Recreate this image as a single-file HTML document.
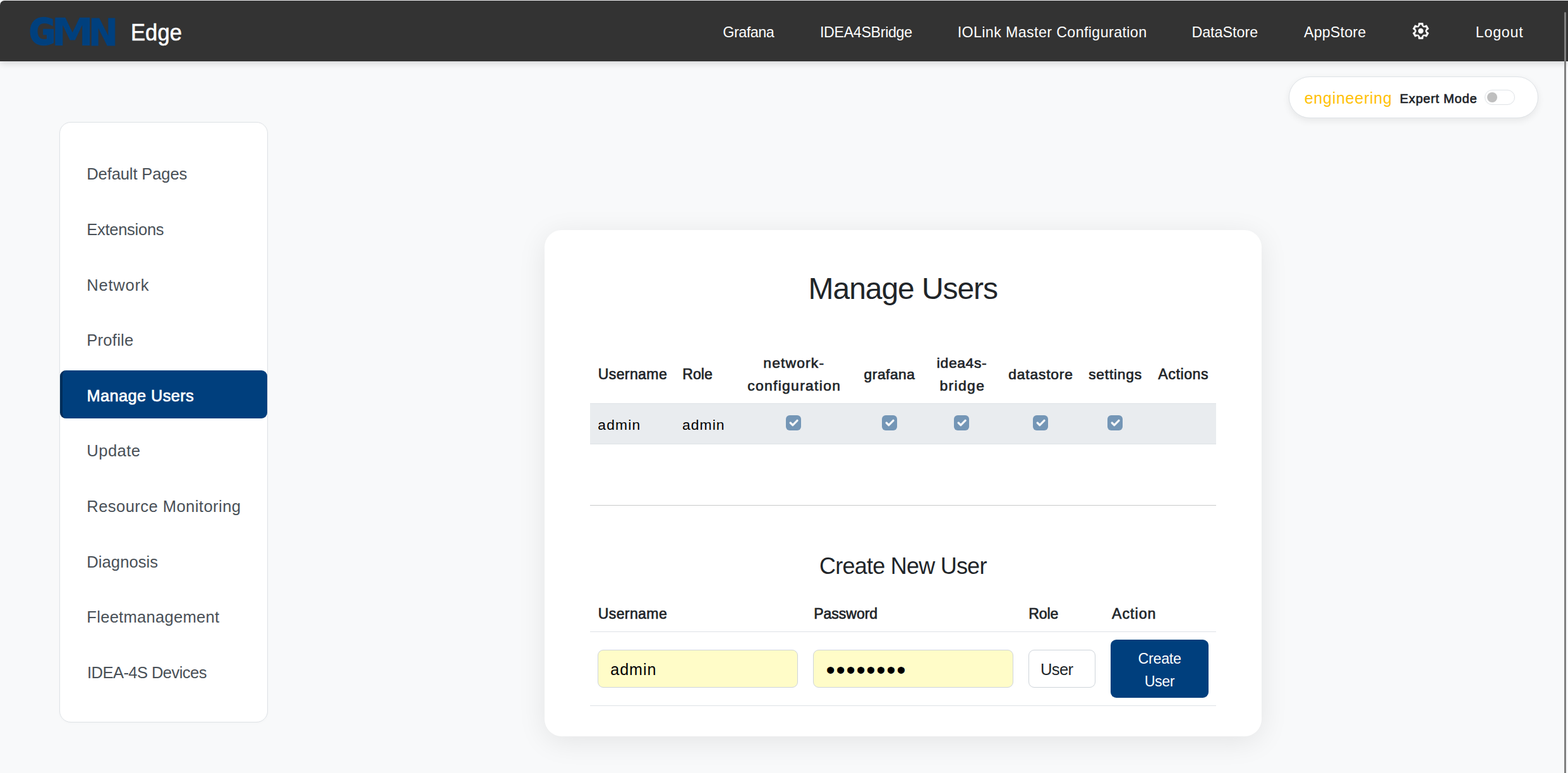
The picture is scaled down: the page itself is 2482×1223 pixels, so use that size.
<!DOCTYPE html>
<html lang="en">
<head>
<meta charset="utf-8">
<title>GMN Edge - Manage Users</title>
<meta name="viewport" content="width=device-width, initial-scale=1">
<style>
*{box-sizing:border-box}
html,body{margin:0;padding:0}
body{width:2482px;height:1223px;overflow:hidden;position:relative;background:#f8f9fa;font-family:"Liberation Sans",sans-serif;color:#212529}
.t{position:absolute;margin:0;padding:0;white-space:pre;font-weight:400;text-decoration:none;display:block}
nav,aside,main,header{position:absolute;left:0;top:0;margin:0;padding:0}
#topbar{left:0;top:1px;width:2482px;height:96px;background:#333333;box-shadow:0 3px 12px rgba(0,0,0,.15);border-top-left-radius:7px}
#logo span{position:absolute;display:block;font-family:"DejaVu Sans",sans-serif;font-size:60px;line-height:60px;font-weight:700;color:#00407e;white-space:pre;-webkit-text-stroke:0px #00407e;transform-origin:0 0}
#gear{position:absolute;left:2236px;top:36px;width:26px;height:26px;overflow:visible}
#pill{position:absolute;left:2039.5px;top:121px;width:395px;height:65.7px;border-radius:33px;background:#fff;border:1px solid #dee2e6;box-shadow:0 4px 12px rgba(0,0,0,.075)}
#switch{position:absolute;left:2350.3px;top:142px;width:47.5px;height:24px;border-radius:12px;border:1px solid #dee2e6;background:#fff}
#knob{position:absolute;left:2353.5px;top:145.7px;width:16.6px;height:16.6px;border-radius:50%;background:#bfbfbf}
#sidebar{position:absolute;left:94px;top:193px;width:329.5px;height:950px;background:#fff;border:1px solid #dee2e6;border-radius:18px;box-shadow:0 1px 4px rgba(0,0,0,.025)}
#active{position:absolute;left:95px;top:586px;width:328px;height:76px;background:#003f7d;border-radius:9px;border-left:4.5px solid #002d5a}
#card{position:absolute;left:862px;top:364px;width:1135px;height:801px;background:#fff;border-radius:27px;box-shadow:0 8px 45px rgba(0,0,0,.085)}
.line{position:absolute;left:934px;width:991px;height:1px;background:#dee2e6}
#row1{position:absolute;left:934px;top:638px;width:991px;height:65px;background:#e9ecef;border-top:1px solid #dee2e6;border-bottom:1px solid #dee2e6}
.cb{position:absolute;width:24px;height:24px;border-radius:6px;background:#7496b6;display:block}
.cb svg{display:block}
.inp{position:absolute;top:1028px;height:59.7px;border:1px solid #ced4da;border-radius:9px;background:#fffcc8}
#btn{position:absolute;left:1758px;top:1012px;width:155px;height:92px;background:#003f7d;border-radius:9px}
#dots{position:absolute;left:1307.55px;top:1040px;font-size:41px;line-height:41px;letter-spacing:1.6px;color:#000;white-space:pre;font-family:"Liberation Sans",sans-serif}
#scroll{position:absolute;left:2476px;top:19px;width:3px;height:1210px;background:#808080;border-radius:2px}
</style>
</head>
<body>
<nav id="topbar"></nav>
<header>
<a id="logo"><span style="left:45.71px;top:23.20px;transform:scale(0.8497,0.9403);-webkit-text-stroke-width:2.5px">G</span><span style="left:80.78px;top:21.49px;transform:scale(1.1303,0.9943);-webkit-text-stroke-width:0px">M</span><span style="left:140.23px;top:22.11px;transform:scale(0.9342,0.9721);-webkit-text-stroke-width:1px">N</span></a>
<span class="t" style="left:207.17px;top:33px;font-size:37.5px;line-height:37.5px;letter-spacing:0.101px;color:#fff;-webkit-text-stroke:0.6px #fff;transform:scaleX(0.92);transform-origin:0 0;">Edge</span>
<span class="t" style="left:1144.25px;top:40px;font-size:23.23px;line-height:23.23px;letter-spacing:-0.408px;color:#fff;">Grafana</span>
<span class="t" style="left:1297.95px;top:40px;font-size:23.23px;line-height:23.23px;letter-spacing:-0.327px;color:#fff;">IDEA4SBridge</span>
<span class="t" style="left:1515.65px;top:40px;font-size:23.23px;line-height:23.23px;letter-spacing:0.398px;color:#fff;">IOLink Master Configuration</span>
<span class="t" style="left:1886.4px;top:40px;font-size:23.23px;line-height:23.23px;letter-spacing:0.025px;color:#fff;">DataStore</span>
<span class="t" style="left:2064.0px;top:40px;font-size:23.23px;line-height:23.23px;letter-spacing:0.179px;color:#fff;">AppStore</span>
<span class="t" style="left:2335.8px;top:40px;font-size:23.23px;line-height:23.23px;letter-spacing:0.77px;color:#fff;">Logout</span>
<svg id="gear" viewBox="0 0 26 26" aria-label="Settings"><path d="M17.50 5.21L17.00 4.40L16.40 0.40L9.60 0.40L9.00 4.40L8.50 5.21L7.55 5.24L3.79 3.76L0.39 9.64L3.55 12.16L4.00 13.00L3.55 13.84L0.39 16.36L3.79 22.24L7.55 20.76L8.50 20.79L9.00 21.60L9.60 25.60L16.40 25.60L17.00 21.60L17.50 20.79L18.45 20.76L22.21 22.24L25.61 16.36L22.45 13.84L22.00 13.00L22.45 12.16L25.61 9.64L22.21 3.76L18.45 5.24ZM16.60 6.76L13.90 2.80L12.10 2.80L9.40 6.76L4.62 7.12L3.72 8.68L5.80 13.00L3.72 17.32L4.62 18.88L9.40 19.24L12.10 23.20L13.90 23.20L16.60 19.24L21.38 18.88L22.28 17.32L20.20 13.00L22.28 8.68L21.38 7.12Z" fill="#fff" fill-rule="evenodd" stroke="#fff" stroke-width="0.7" stroke-linejoin="round"/><circle cx="13" cy="13" r="4.2" fill="#fff"/></svg>
</header>
<div id="pill"></div>
<div id="switch"></div><div id="knob"></div>
<span class="t" style="left:2064.7px;top:143px;font-size:25.08px;line-height:25.08px;letter-spacing:0.71px;color:#ffc107;">engineering</span>
<span class="t" style="left:2215.85px;top:146px;font-size:20.16px;line-height:20.16px;letter-spacing:0.76px;color:#212529;-webkit-text-stroke:0.7px #212529;">Expert Mode</span>
<aside id="sidebar"></aside>
<div id="active"></div>
<span class="t" style="left:137.3px;top:263px;font-size:25.56px;line-height:25.56px;letter-spacing:-0.125px;color:#495057;">Default Pages</span>
<span class="t" style="left:137.3px;top:351px;font-size:25.56px;line-height:25.56px;letter-spacing:-0.3px;color:#495057;">Extensions</span>
<span class="t" style="left:137.3px;top:439px;font-size:25.56px;line-height:25.56px;letter-spacing:0.758px;color:#495057;">Network</span>
<span class="t" style="left:137.3px;top:526px;font-size:25.56px;line-height:25.56px;letter-spacing:0.258px;color:#495057;">Profile</span>
<span class="t" style="left:137.55px;top:614px;font-size:25.34px;line-height:25.34px;letter-spacing:0.409px;color:#fff;-webkit-text-stroke:0.7px #fff;">Manage Users</span>
<span class="t" style="left:137.3px;top:701px;font-size:25.56px;line-height:25.56px;letter-spacing:0.47px;color:#495057;">Update</span>
<span class="t" style="left:137.3px;top:789px;font-size:25.56px;line-height:25.56px;letter-spacing:0.444px;color:#495057;">Resource Monitoring</span>
<span class="t" style="left:137.3px;top:877px;font-size:25.56px;line-height:25.56px;letter-spacing:0.081px;color:#495057;">Diagnosis</span>
<span class="t" style="left:137.3px;top:964px;font-size:25.56px;line-height:25.56px;letter-spacing:0.282px;color:#495057;">Fleetmanagement</span>
<span class="t" style="left:138.05px;top:1052px;font-size:25.56px;line-height:25.56px;letter-spacing:-0.568px;color:#495057;">IDEA-4S Devices</span>
<main id="card"></main>
<h2 class="t" style="left:1279.6px;top:433px;font-size:48.0px;line-height:48.0px;letter-spacing:-1.068px;color:#212529;">Manage Users</h2>
<span class="t" style="left:946.7px;top:581px;font-size:23.04px;line-height:23.04px;letter-spacing:0.4px;color:#212529;-webkit-text-stroke:0.7px #212529;">Username</span>
<span class="t" style="left:1080.3px;top:581px;font-size:23.04px;line-height:23.04px;letter-spacing:0.017px;color:#212529;-webkit-text-stroke:0.7px #212529;">Role</span>
<span class="t" style="left:1208.25px;top:563px;font-size:22.8px;line-height:22.8px;letter-spacing:1.2px;color:#212529;-webkit-text-stroke:0.7px #212529;">network-</span>
<span class="t" style="left:1183.15px;top:599px;font-size:22.8px;line-height:22.8px;letter-spacing:1.354px;color:#212529;-webkit-text-stroke:0.7px #212529;">configuration</span>
<span class="t" style="left:1367.6px;top:581px;font-size:22.8px;line-height:22.8px;letter-spacing:0.508px;color:#212529;-webkit-text-stroke:0.7px #212529;">grafana</span>
<span class="t" style="left:1482.85px;top:563px;font-size:22.8px;line-height:22.8px;letter-spacing:0.658px;color:#212529;-webkit-text-stroke:0.7px #212529;">idea4s-</span>
<span class="t" style="left:1487.5px;top:599px;font-size:22.8px;line-height:22.8px;letter-spacing:1.39px;color:#212529;-webkit-text-stroke:0.7px #212529;">bridge</span>
<span class="t" style="left:1596.3px;top:581px;font-size:22.8px;line-height:22.8px;letter-spacing:0.825px;color:#212529;-webkit-text-stroke:0.7px #212529;">datastore</span>
<span class="t" style="left:1723.15px;top:581px;font-size:22.8px;line-height:22.8px;letter-spacing:0.779px;color:#212529;-webkit-text-stroke:0.7px #212529;">settings</span>
<span class="t" style="left:1833.25px;top:581px;font-size:23.04px;line-height:23.04px;letter-spacing:0.625px;color:#212529;-webkit-text-stroke:0.7px #212529;">Actions</span>
<div id="row1"></div>
<span class="t" style="left:946.3px;top:661px;font-size:22.8px;line-height:22.8px;letter-spacing:1.213px;color:#000;">admin</span>
<span class="t" style="left:1079.9px;top:661px;font-size:22.8px;line-height:22.8px;letter-spacing:1.137px;color:#000;">admin</span>
<span class="cb" style="left:1244px;top:657px"><svg viewBox="0 0 20 20" width="24" height="24"><path fill="none" stroke="#f4f6f8" stroke-linecap="round" stroke-linejoin="round" stroke-width="2.8" d="m6 10 3 3 6-6"/></svg></span>
<span class="cb" style="left:1396px;top:657px"><svg viewBox="0 0 20 20" width="24" height="24"><path fill="none" stroke="#f4f6f8" stroke-linecap="round" stroke-linejoin="round" stroke-width="2.8" d="m6 10 3 3 6-6"/></svg></span>
<span class="cb" style="left:1510px;top:657px"><svg viewBox="0 0 20 20" width="24" height="24"><path fill="none" stroke="#f4f6f8" stroke-linecap="round" stroke-linejoin="round" stroke-width="2.8" d="m6 10 3 3 6-6"/></svg></span>
<span class="cb" style="left:1635px;top:657px"><svg viewBox="0 0 20 20" width="24" height="24"><path fill="none" stroke="#f4f6f8" stroke-linecap="round" stroke-linejoin="round" stroke-width="2.8" d="m6 10 3 3 6-6"/></svg></span>
<span class="cb" style="left:1753px;top:657px"><svg viewBox="0 0 20 20" width="24" height="24"><path fill="none" stroke="#f4f6f8" stroke-linecap="round" stroke-linejoin="round" stroke-width="2.8" d="m6 10 3 3 6-6"/></svg></span>

<div class="line" style="top:799px;background:#c8c9ca"></div>
<h3 class="t" style="left:1296.95px;top:878px;font-size:36.0px;line-height:36.0px;letter-spacing:-0.761px;color:#212529;">Create New User</h3>
<span class="t" style="left:946.7px;top:960px;font-size:23.04px;line-height:23.04px;letter-spacing:0.4px;color:#212529;-webkit-text-stroke:0.7px #212529;">Username</span>
<span class="t" style="left:1288.2px;top:960px;font-size:23.04px;line-height:23.04px;letter-spacing:-0.029px;color:#212529;-webkit-text-stroke:0.7px #212529;">Password</span>
<span class="t" style="left:1628.2px;top:960px;font-size:23.04px;line-height:23.04px;letter-spacing:-0.05px;color:#212529;-webkit-text-stroke:0.7px #212529;">Role</span>
<span class="t" style="left:1760.05px;top:960px;font-size:23.04px;line-height:23.04px;letter-spacing:1.06px;color:#212529;-webkit-text-stroke:0.7px #212529;">Action</span>
<div class="line" style="top:999px"></div>
<div class="inp" style="left:946px;width:317px"></div>
<div class="inp" style="left:1287px;width:317px"></div>
<div class="inp" style="left:1628px;width:106px;background:#fff"></div>
<span class="t" style="left:966.3px;top:1047px;font-size:25.08px;line-height:25.08px;letter-spacing:0.962px;color:#000;">admin</span>
<span id="dots">••••••••</span>
<span class="t" style="left:1647.0px;top:1047px;font-size:25.56px;line-height:25.56px;letter-spacing:-0.633px;color:#212529;">User</span>
<div id="btn"></div>
<span class="t" style="left:1801.45px;top:1031px;font-size:23.23px;line-height:23.23px;letter-spacing:-0.24px;color:#fff;">Create</span>
<span class="t" style="left:1811.65px;top:1067px;font-size:23.23px;line-height:23.23px;letter-spacing:-0.4px;color:#fff;">User</span>
<div class="line" style="top:1116px"></div>
<div id="scroll"></div>
</body>
</html>
